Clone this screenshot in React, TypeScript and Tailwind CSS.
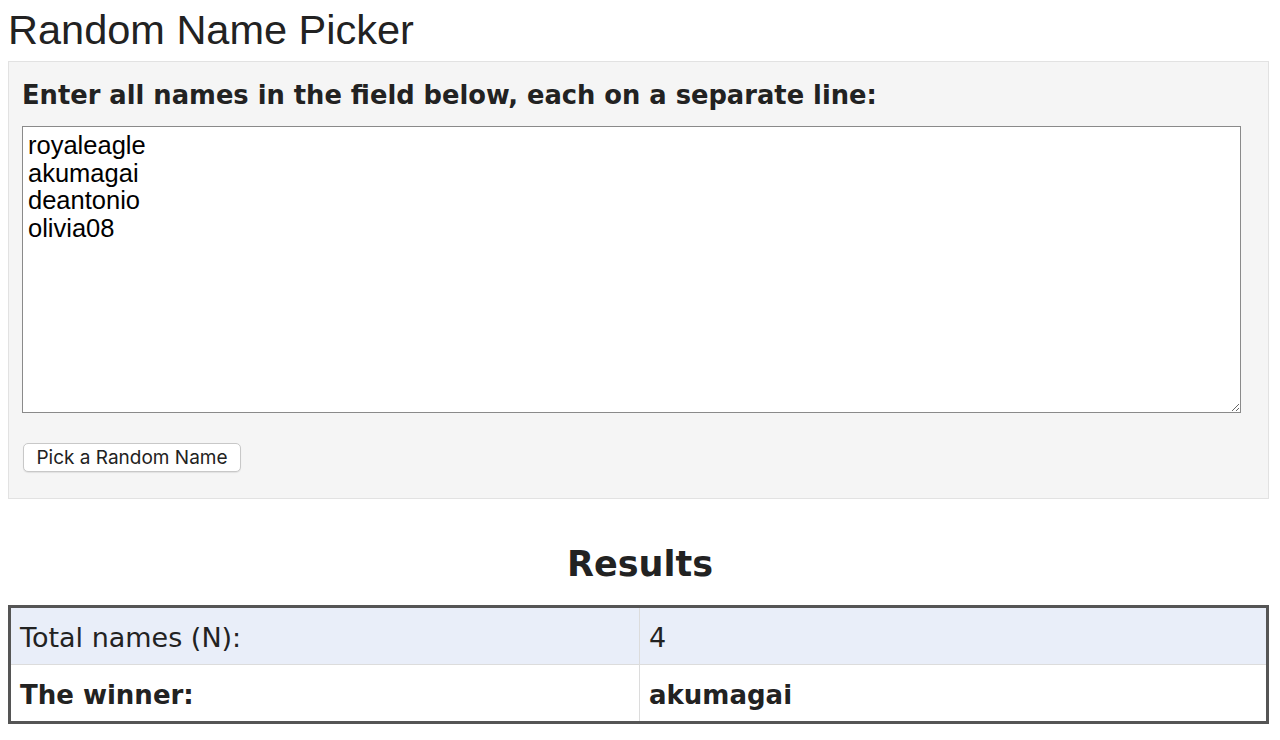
import React from "react";

const names = ["royaleagle", "akumagai", "deantonio", "olivia08"];

function ResultRow({
  label,
  value,
  bold,
  shaded,
}: {
  label: string;
  value: string;
  bold?: boolean;
  shaded?: boolean;
}) {
  const weight = bold ? "font-bold text-[26px]" : "font-normal text-[27px]";
  return (
    <tr className={shaded ? "bg-[#e9eef9]" : "bg-white"}>
      <td
        className={`w-[630px] border-b border-r border-[#dcdcdc] px-[9px] pt-[15px] pb-[11px] leading-[30px] ${weight}`}
      >
        {label}
      </td>
      <td
        className={`border-b border-[#dcdcdc] px-[9px] pt-[15px] pb-[11px] leading-[30px] ${weight}`}
      >
        {value}
      </td>
    </tr>
  );
}

export default function App() {
  return (
    <div className="min-h-[740px] bg-white text-[#222]">
      <h1 className="px-[8px] pt-[6px] font-['Liberation_Sans',Arial,sans-serif] text-[41.5px] leading-[47px] text-[#222]">
        Random Name Picker
      </h1>

      <section className="mx-[8px] mt-[8px] w-[1261px] border border-[#e2e2e2] bg-[#f5f5f5] px-[13px] pt-[18px] pb-[26px]">
        <h3 className="font-['DejaVu_Sans',Verdana,sans-serif] text-[25.75px] font-bold leading-[30px] text-[#222]">
          Enter all names in the field below, each on a separate line:
        </h3>
        <textarea
          defaultValue={names.join("\n")}
          spellCheck={false}
          className="mt-[16px] block h-[287px] w-[1219px] border border-[#8a8a8a] bg-white pt-[5px] pr-[4px] pb-[4px] pl-[5px] font-['Liberation_Sans',Arial,sans-serif] text-[25.5px] leading-[27.7px] text-black outline-none"
        />
        <button
          type="button"
          className="mt-[30px] ml-[1px] block h-[29px] w-[218px] rounded-[5px] border border-[#c8c8c8] bg-white font-['Inter',sans-serif] text-[19px] leading-[27px] text-[#222] shadow-[0_1px_1px_rgba(0,0,0,0.08)]"
        >
          Pick a Random Name
        </button>
      </section>

      <h2 className="mt-[45px] text-center font-['DejaVu_Sans',Verdana,sans-serif] text-[35px] font-bold leading-[41px] text-[#222]">
        Results
      </h2>

      <table className="mx-[8px] mt-[20px] w-[1261px] border-collapse border-[3px] border-[#555] font-['DejaVu_Sans',Verdana,sans-serif] text-[#222]">
        <tbody>
          <ResultRow label="Total names (N):" value={String(names.length)} shaded />
          <ResultRow label="The winner:" value="akumagai" bold />
        </tbody>
      </table>
    </div>
  );
}
